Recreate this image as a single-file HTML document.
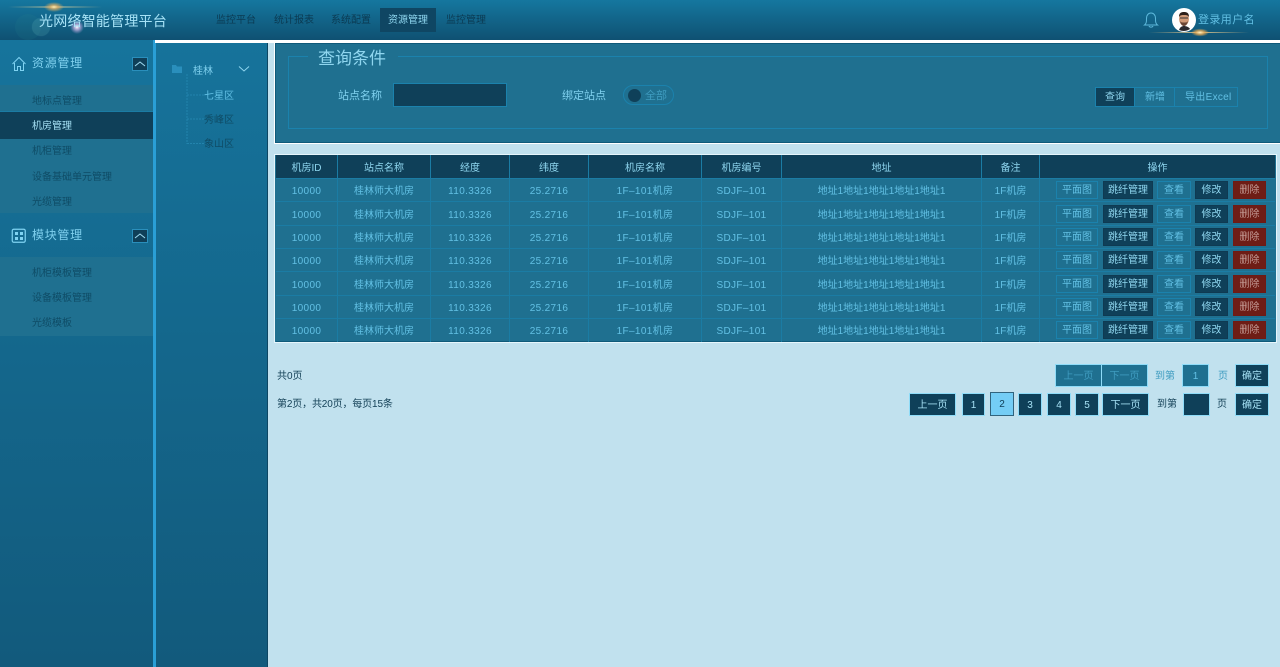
<!DOCTYPE html>
<html lang="zh-CN"><head><meta charset="utf-8"><title>光网络智能管理平台</title>
<style>
*{box-sizing:border-box;margin:0;padding:0}
html,body{width:1280px;height:667px;overflow:hidden;background:#c1e1ee;font-family:"Liberation Sans","Noto Sans CJK SC",sans-serif}
.a{position:absolute}
.t{position:absolute;white-space:nowrap;line-height:1}
#hd{left:0;top:0;width:1280px;height:40px;background:linear-gradient(#15779f,#0f5172)}
.nav{position:absolute;top:8px;height:24px;line-height:26px;font-size:10px;color:#0b3a52;text-align:center}
.sb{left:0;top:40px;width:153px;height:627px;background:linear-gradient(#16749c,#125a7c)}
.tree{left:156px;top:43px;width:112px;height:624px;background:linear-gradient(#16739b,#125a7c);border-right:1px solid #0d4663}
.sec{left:0;width:153px;background:#1f7090}
.sub{position:absolute;left:32px;font-size:10px;color:#0f4c66;line-height:1;white-space:nowrap;margin-top:2px}
.row{position:absolute;left:0;width:1280px;height:0}
.tc{position:absolute;top:9px;text-align:center;font-size:10px;line-height:1;white-space:nowrap;color:#62c0e4}
.n{letter-spacing:.35px}
.b{position:absolute;top:3px;height:18px;line-height:18px;text-align:center;font-size:10px;white-space:nowrap}
.o{border:1px solid #1b82ad;color:#62c0e4;background:transparent}
.d{border:1px solid #0f3a52;color:#8fd6ef;background:#0f4059}
.r{border:1px solid #6f1a14;color:#c49a94;background:#6e1d16}
.p{position:absolute;height:23px;line-height:23px;text-align:center;font-size:10px;background:#0f4059;color:#a5e0f4;border:1px solid #8fdcf8}
.hl{position:absolute;left:276px;width:999px;height:1px;background:#1b7ca4}
.vl{position:absolute;top:155px;width:1px;height:187px;background:#1b7ca4}
</style></head><body>
<div id="hd" class="a"></div>
<svg class="a" style="left:0;top:0" width="120" height="42">
<defs><radialGradient id="g1"><stop offset="0" stop-color="#fff0b8"/><stop offset=".4" stop-color="#e6b060" stop-opacity=".75"/><stop offset="1" stop-color="#e6b060" stop-opacity="0"/></radialGradient>
<radialGradient id="g2"><stop offset="0" stop-color="#fff"/><stop offset=".4" stop-color="#e0c0f0" stop-opacity=".7"/><stop offset="1" stop-color="#c0a0e0" stop-opacity="0"/></radialGradient>
<linearGradient id="gl"><stop offset="0" stop-color="#d8c690" stop-opacity="0"/><stop offset=".5" stop-color="#e8d8a0"/><stop offset="1" stop-color="#d8c690" stop-opacity="0"/></linearGradient></defs>
<rect x="8" y="6.500" width="94" height="1" fill="url(#gl)"/>
<ellipse cx="54" cy="7" rx="10" ry="5" fill="url(#g1)"/>
<circle cx="77" cy="27" r="7" fill="url(#g2)"/>
<circle cx="28" cy="27" r="13" fill="#2a8a90" opacity=".14"/>
<circle cx="41" cy="27" r="9" fill="#7cc" opacity=".16" stroke="#9dd" stroke-opacity=".25"/>
</svg>
<div class="t" style="left:39px;top:14px;font-size:14px;color:#a6e2f6;letter-spacing:.22px">光网络智能管理平台</div>
<div class="nav" style="left:208px;width:56px">监控平台</div>
<div class="nav" style="left:266px;width:56px">统计报表</div>
<div class="nav" style="left:323px;width:56px">系统配置</div>
<div class="nav" style="left:380px;width:56px;background:#0f4663;color:#8fd6ef">资源管理</div>
<div class="nav" style="left:438px;width:56px">监控管理</div>
<svg class="a" style="left:1143px;top:11px" width="16" height="18" fill="none" stroke="#5db9dc" stroke-width="1"><path d="M1.500 14c2-1.500 2-3.500 2-6.500C3.500 4 5.500 2 8 2s4.500 2 4.500 5.500c0 3 0 5 2 6.500zM6 15c.5 1.500 3.500 1.500 4 0"/></svg>
<svg class="a" style="left:1172px;top:8px" width="24" height="24" viewBox="0 0 24 24"><circle cx="12" cy="12" r="12" fill="#fff"/><path d="M7 22c1-3 3-4 5-4s5 1 6 3a12 12 0 0 1-11 1z" fill="#2a2a30"/><ellipse cx="12" cy="11" rx="5" ry="6.500" fill="#d09a78"/><path d="M7 9c0-4 2-5 5-5s5 1 5 5c-1-2-3-2-5-2s-4 0-5 2z" fill="#2c1f1a"/><path d="M8 13c.5 3 2 5 4 5s3.500-2 4-5c-1 1.500-2 1.500-4 1.500s-3 0-4-1.500z" fill="#6a4636"/><rect x="8" y="9.500" width="8" height="1" fill="#333"/></svg>
<svg class="a" style="left:1145px;top:26px" width="110" height="12"><defs><radialGradient id="g4"><stop offset="0" stop-color="#fff4c8"/><stop offset=".5" stop-color="#e8a850" stop-opacity=".8"/><stop offset="1" stop-color="#e8a850" stop-opacity="0"/></radialGradient><linearGradient id="gr"><stop offset="0" stop-color="#c8b080" stop-opacity="0"/><stop offset=".5" stop-color="#e0c890"/><stop offset="1" stop-color="#c8b080" stop-opacity="0"/></linearGradient></defs><rect x="4" y="6" width="100" height="1" fill="url(#gr)"/><ellipse cx="55" cy="6.500" rx="9" ry="4" fill="url(#g4)"/></svg>
<div class="t" style="left:1198px;top:15px;font-size:11px;color:#62c0e4;letter-spacing:.4px">登录用户名</div>

<div class="a sb"></div>
<div class="a" style="left:153px;top:40px;width:3px;height:627px;background:#2a9fd6"></div>
<div class="a" style="left:155px;top:40px;width:1125px;height:3px;background:#fff"></div>
<div class="a tree"></div>
<div class="a" style="left:268px;top:43px;width:1012px;height:624px;background:#c1e1ee"></div>

<svg class="a" style="left:11px;top:56px" width="16" height="16" fill="none" stroke="#7fd3f2" stroke-width="1"><path d="M1.500 8 8 1.500 14.500 8M3.500 7v7.500h3v-4h3v4h3V7"/></svg>
<div class="t" style="left:32px;top:57px;font-size:12px;color:#7fd0ee;letter-spacing:.7px">资源管理</div>
<div class="a" style="left:132px;top:57px;width:16px;height:14px;background:#0f3f58;border:1px solid #2a8fbc"></div>
<svg class="a" style="left:134px;top:60px" width="12" height="8" fill="none" stroke="#9fdcf2"><path d="M1 6 6 2l5 4"/></svg>
<div class="a sec" style="top:85px;height:128px"></div>
<div class="a" style="left:0;top:111px;width:153px;height:28px;background:#0f4059;border-top:1px solid #1b7ca4"></div>
<div class="sub" style="top:95px">地标点管理</div>
<div class="sub" style="top:120px;color:#a5e0f4">机房管理</div>
<div class="sub" style="top:145px">机柜管理</div>
<div class="sub" style="top:171px">设备基础单元管理</div>
<div class="sub" style="top:196px">光缆管理</div>

<svg class="a" style="left:11px;top:228px" width="16" height="16" fill="none"><rect x="1.250" y="1.250" width="13" height="13" rx="1.500" stroke="#7fd3f2" stroke-width="1.200"/><rect x="4" y="4" width="3" height="3" fill="#7fd3f2"/><rect x="9" y="4" width="3" height="3" fill="#7fd3f2"/><rect x="4" y="9" width="3" height="3" fill="#7fd3f2"/><rect x="9" y="9" width="3" height="3" fill="#7fd3f2"/></svg>
<div class="t" style="left:32px;top:229px;font-size:12px;color:#7fd0ee;letter-spacing:.7px">模块管理</div>
<div class="a" style="left:132px;top:229px;width:16px;height:14px;background:#0f3f58;border:1px solid #2a8fbc"></div>
<svg class="a" style="left:134px;top:232px" width="12" height="8" fill="none" stroke="#9fdcf2"><path d="M1 6 6 2l5 4"/></svg>
<div class="a sec" style="top:257px;height:79px"></div>
<div class="sub" style="top:267px">机柜模板管理</div>
<div class="sub" style="top:292px">设备模板管理</div>
<div class="sub" style="top:317px">光缆模板</div>

<svg class="a" style="left:171px;top:64px" width="12" height="10"><path d="M1 1h4l1 1.500h5V9H1z" fill="#2a8fbc"/></svg>
<div class="t" style="left:193px;top:67px;font-size:10px;color:#7fd0ee">桂林</div>
<svg class="a" style="left:238px;top:65px" width="12" height="8" fill="none" stroke="#8fd6ef"><path d="M1 1.500 6 6l5-4.500"/></svg>
<svg class="a" style="left:186px;top:74px" width="20" height="72" fill="none" stroke="#2384ad" stroke-dasharray="2 1"><path d="M1 0v70M1 21h18M1 45h18M1 69.500h18"/></svg>
<div class="t" style="left:204px;top:92px;font-size:10px;color:#62c0e4">七星区</div>
<div class="t" style="left:204px;top:116px;font-size:10px;color:#0f4c66">秀峰区</div>
<div class="t" style="left:204px;top:140px;font-size:10px;color:#0f4c66">象山区</div>

<div class="a" style="left:275px;top:43px;width:1005px;height:100px;background:#1f7090;border:1px solid #0f5a7a;border-right:none;outline:1px solid #fff"></div>
<div class="a" style="left:288px;top:56px;width:980px;height:73px;border:1px solid #1b82ad"></div>
<div class="a" style="left:308px;top:50px;width:90px;height:14px;background:#1f7090"></div>
<div class="t" style="left:318px;top:50px;font-size:17px;color:#8fd6ef">查询条件</div>
<div class="t" style="left:338px;top:91px;font-size:11px;color:#7fd0ee">站点名称</div>
<div class="a" style="left:393px;top:83px;width:114px;height:24px;background:#0f4059;border:1px solid #1b82ad"></div>
<div class="t" style="left:562px;top:91px;font-size:11px;color:#7fd0ee">绑定站点</div>
<div class="a" style="left:623px;top:85px;width:51px;height:20px;border:1px solid #1b82ad;border-radius:10px"></div>
<div class="a" style="left:628px;top:89px;width:13px;height:13px;border-radius:50%;background:#0f4059"></div>
<div class="t" style="left:645px;top:91px;font-size:11px;color:#3f9cc0">全部</div>
<div class="a" style="left:1095px;top:87px;width:143px;height:20px;border:1px solid #1b82ad"></div>
<div class="a" style="left:1096px;top:88px;width:39px;height:18px;background:#0f4059;border-right:1px solid #1b82ad"></div>
<div class="a" style="left:1174px;top:88px;width:1px;height:18px;background:#1b82ad"></div>
<div class="t" style="left:1105px;top:93px;font-size:10px;color:#8fd6ef">查询</div>
<div class="t" style="left:1145px;top:93px;font-size:10px;color:#62c0e4">新增</div>
<div class="t" style="left:1185px;top:93px;font-size:10px;color:#62c0e4;letter-spacing:.3px">导出Excel</div>

<!-- table -->
<div class="a" style="left:275px;top:155px;width:1001px;height:187px;background:#1f7090;outline:1px solid #e6f6fc"></div>
<div class="a" style="left:276px;top:155px;width:999px;height:23px;background:#0f4059"></div>
<div class="hl" style="top:178px"></div><div class="hl" style="top:201px"></div><div class="hl" style="top:225px"></div><div class="hl" style="top:248px"></div><div class="hl" style="top:271px"></div><div class="hl" style="top:295px"></div><div class="hl" style="top:318px"></div>
<div class="a" style="left:276px;top:341px;width:999px;height:1px;background:#0f5a7a"></div>
<div class="vl" style="left:337px"></div><div class="vl" style="left:430px"></div><div class="vl" style="left:509px"></div><div class="vl" style="left:588px"></div><div class="vl" style="left:701px"></div><div class="vl" style="left:781px"></div><div class="vl" style="left:981px"></div><div class="vl" style="left:1039px"></div>

<div class="row" style="top:155px"><div class="tc" style="left:276px;width:61px;color:#8fd6ef">机房ID</div><div class="tc" style="left:338px;width:92px;color:#8fd6ef">站点名称</div><div class="tc" style="left:431px;width:78px;color:#8fd6ef">经度</div><div class="tc" style="left:510px;width:78px;color:#8fd6ef">纬度</div><div class="tc" style="left:589px;width:112px;color:#8fd6ef">机房名称</div><div class="tc" style="left:702px;width:79px;color:#8fd6ef">机房编号</div><div class="tc" style="left:782px;width:199px;color:#8fd6ef">地址</div><div class="tc" style="left:982px;width:57px;color:#8fd6ef">备注</div><div class="tc" style="left:1040px;width:235px;color:#8fd6ef">操作</div></div>

<div class="row" style="top:178px"><div class="tc n" style="left:276px;width:61px">10000</div><div class="tc" style="left:338px;width:92px">桂林师大机房</div><div class="tc n" style="left:431px;width:78px">110.3326</div><div class="tc n" style="left:510px;width:78px">25.2716</div><div class="tc n" style="left:589px;width:112px">1F–101机房</div><div class="tc n" style="left:702px;width:79px">SDJF–101</div><div class="tc" style="left:782px;width:199px">地址1地址1地址1地址1地址1</div><div class="tc" style="left:982px;width:57px">1F机房</div><div class="b o" style="left:1056px;width:42px">平面图</div><div class="b d" style="left:1103px;width:50px">跳纤管理</div><div class="b o" style="left:1157px;width:34px">查看</div><div class="b d" style="left:1195px;width:33px">修改</div><div class="b r" style="left:1233px;width:33px">删除</div></div>

<div class="row" style="top:202px"><div class="tc n" style="left:276px;width:61px">10000</div><div class="tc" style="left:338px;width:92px">桂林师大机房</div><div class="tc n" style="left:431px;width:78px">110.3326</div><div class="tc n" style="left:510px;width:78px">25.2716</div><div class="tc n" style="left:589px;width:112px">1F–101机房</div><div class="tc n" style="left:702px;width:79px">SDJF–101</div><div class="tc" style="left:782px;width:199px">地址1地址1地址1地址1地址1</div><div class="tc" style="left:982px;width:57px">1F机房</div><div class="b o" style="left:1056px;width:42px">平面图</div><div class="b d" style="left:1103px;width:50px">跳纤管理</div><div class="b o" style="left:1157px;width:34px">查看</div><div class="b d" style="left:1195px;width:33px">修改</div><div class="b r" style="left:1233px;width:33px">删除</div></div>

<div class="row" style="top:225px"><div class="tc n" style="left:276px;width:61px">10000</div><div class="tc" style="left:338px;width:92px">桂林师大机房</div><div class="tc n" style="left:431px;width:78px">110.3326</div><div class="tc n" style="left:510px;width:78px">25.2716</div><div class="tc n" style="left:589px;width:112px">1F–101机房</div><div class="tc n" style="left:702px;width:79px">SDJF–101</div><div class="tc" style="left:782px;width:199px">地址1地址1地址1地址1地址1</div><div class="tc" style="left:982px;width:57px">1F机房</div><div class="b o" style="left:1056px;width:42px">平面图</div><div class="b d" style="left:1103px;width:50px">跳纤管理</div><div class="b o" style="left:1157px;width:34px">查看</div><div class="b d" style="left:1195px;width:33px">修改</div><div class="b r" style="left:1233px;width:33px">删除</div></div>

<div class="row" style="top:248px"><div class="tc n" style="left:276px;width:61px">10000</div><div class="tc" style="left:338px;width:92px">桂林师大机房</div><div class="tc n" style="left:431px;width:78px">110.3326</div><div class="tc n" style="left:510px;width:78px">25.2716</div><div class="tc n" style="left:589px;width:112px">1F–101机房</div><div class="tc n" style="left:702px;width:79px">SDJF–101</div><div class="tc" style="left:782px;width:199px">地址1地址1地址1地址1地址1</div><div class="tc" style="left:982px;width:57px">1F机房</div><div class="b o" style="left:1056px;width:42px">平面图</div><div class="b d" style="left:1103px;width:50px">跳纤管理</div><div class="b o" style="left:1157px;width:34px">查看</div><div class="b d" style="left:1195px;width:33px">修改</div><div class="b r" style="left:1233px;width:33px">删除</div></div>

<div class="row" style="top:272px"><div class="tc n" style="left:276px;width:61px">10000</div><div class="tc" style="left:338px;width:92px">桂林师大机房</div><div class="tc n" style="left:431px;width:78px">110.3326</div><div class="tc n" style="left:510px;width:78px">25.2716</div><div class="tc n" style="left:589px;width:112px">1F–101机房</div><div class="tc n" style="left:702px;width:79px">SDJF–101</div><div class="tc" style="left:782px;width:199px">地址1地址1地址1地址1地址1</div><div class="tc" style="left:982px;width:57px">1F机房</div><div class="b o" style="left:1056px;width:42px">平面图</div><div class="b d" style="left:1103px;width:50px">跳纤管理</div><div class="b o" style="left:1157px;width:34px">查看</div><div class="b d" style="left:1195px;width:33px">修改</div><div class="b r" style="left:1233px;width:33px">删除</div></div>

<div class="row" style="top:295px"><div class="tc n" style="left:276px;width:61px">10000</div><div class="tc" style="left:338px;width:92px">桂林师大机房</div><div class="tc n" style="left:431px;width:78px">110.3326</div><div class="tc n" style="left:510px;width:78px">25.2716</div><div class="tc n" style="left:589px;width:112px">1F–101机房</div><div class="tc n" style="left:702px;width:79px">SDJF–101</div><div class="tc" style="left:782px;width:199px">地址1地址1地址1地址1地址1</div><div class="tc" style="left:982px;width:57px">1F机房</div><div class="b o" style="left:1056px;width:42px">平面图</div><div class="b d" style="left:1103px;width:50px">跳纤管理</div><div class="b o" style="left:1157px;width:34px">查看</div><div class="b d" style="left:1195px;width:33px">修改</div><div class="b r" style="left:1233px;width:33px">删除</div></div>

<div class="row" style="top:318px"><div class="tc n" style="left:276px;width:61px">10000</div><div class="tc" style="left:338px;width:92px">桂林师大机房</div><div class="tc n" style="left:431px;width:78px">110.3326</div><div class="tc n" style="left:510px;width:78px">25.2716</div><div class="tc n" style="left:589px;width:112px">1F–101机房</div><div class="tc n" style="left:702px;width:79px">SDJF–101</div><div class="tc" style="left:782px;width:199px">地址1地址1地址1地址1地址1</div><div class="tc" style="left:982px;width:57px">1F机房</div><div class="b o" style="left:1056px;width:42px">平面图</div><div class="b d" style="left:1103px;width:50px">跳纤管理</div><div class="b o" style="left:1157px;width:34px">查看</div><div class="b d" style="left:1195px;width:33px">修改</div><div class="b r" style="left:1233px;width:33px">删除</div></div>

<!-- pagination -->
<div class="t" style="left:277px;top:372px;font-size:10px;color:#123f55">共0页</div>
<div class="t" style="left:277px;top:400px;font-size:10px;color:#123f55;letter-spacing:-.15px">第2页，共20页，每页15条</div>
<div class="p" style="left:1055px;top:364px;width:47px;background:#1f7090;color:#3f9cc0">上一页</div>
<div class="p" style="left:1101px;top:364px;width:47px;background:#1f7090;color:#3f9cc0">下一页</div>
<div class="t" style="left:1155px;top:372px;font-size:10px;color:#3f9cc0">到第</div>
<div class="p" style="left:1182px;top:364px;width:27px;background:#1f7090;color:#62c0e4">1</div>
<div class="t" style="left:1218px;top:372px;font-size:10px;color:#3f9cc0">页</div>
<div class="p" style="left:1235px;top:364px;width:34px">确定</div>
<div class="p" style="left:909px;top:393px;width:47px">上一页</div>
<div class="p" style="left:962px;top:393px;width:23px">1</div>
<div class="p" style="left:990px;top:392px;width:24px;height:24px;line-height:24px;background:#74cdf5;color:#0f4059;border-color:#31647e">2</div>
<div class="p" style="left:1018px;top:393px;width:24px">3</div>
<div class="p" style="left:1047px;top:393px;width:24px">4</div>
<div class="p" style="left:1075px;top:393px;width:24px">5</div>
<div class="p" style="left:1102px;top:393px;width:47px">下一页</div>
<div class="t" style="left:1157px;top:400px;font-size:10px;color:#123f55">到第</div>
<div class="p" style="left:1183px;top:393px;width:27px"></div>
<div class="t" style="left:1217px;top:400px;font-size:10px;color:#123f55">页</div>
<div class="p" style="left:1235px;top:393px;width:34px">确定</div>
</body></html>
